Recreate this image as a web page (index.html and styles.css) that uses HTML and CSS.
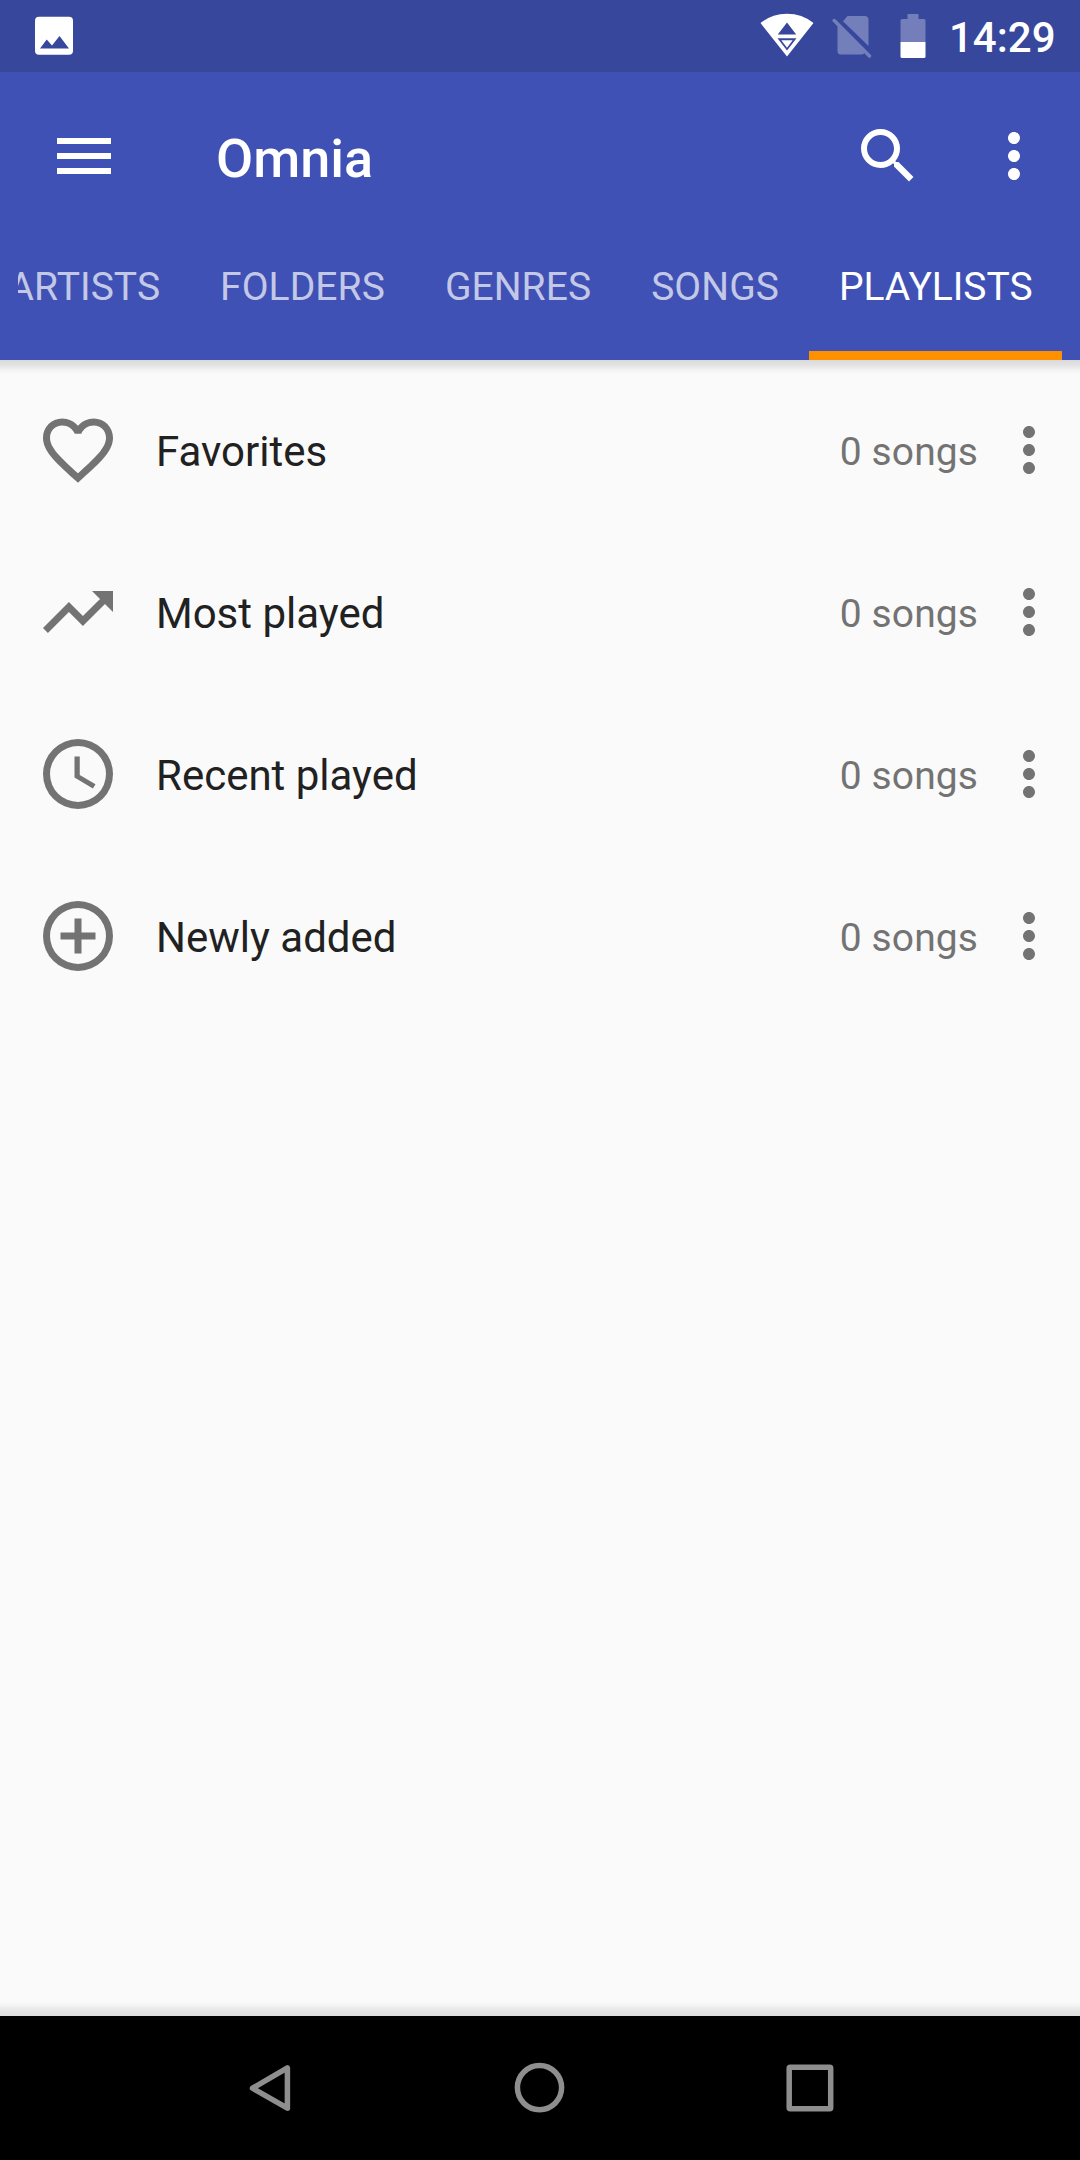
FILE: index.html
```html
<!DOCTYPE html>
<html lang="en">
<head>
<meta charset="utf-8">
<title>Omnia</title>
<link rel="stylesheet" href="styles.css">
</head>
<body>
<svg width="0" height="0" class="defs"><defs>
<symbol id="more" viewBox="0 0 24 24"><path d="M12 8c1.1 0 2-.9 2-2s-.9-2-2-2-2 .9-2 2 .9 2 2 2zm0 2c-1.100 0-2 .9-2 2s.9 2 2 2 2-.9 2-2-.9-2-2-2zm0 6c-1.100 0-2 .9-2 2s.9 2 2 2 2-.9 2-2-.9-2-2-2z"/></symbol>
</defs></svg>
<div class="screen">
  <div class="status">
    <svg class="photo" width="40" height="40" viewBox="0 0 40 40"><path fill-rule="evenodd" d="M5 .7h30a4 4 0 0 1 4 4v30a4 4 0 0 1-4 4H5a4 4 0 0 1-4-4v-30a4 4 0 0 1 4-4zM6 32.500h29L25.500 20 18 29.500 12.700 23.500z"/></svg>
    <svg class="wifi" width="54" height="44" viewBox="0 0 54 44"><path fill-rule="evenodd" d="M.5 10Q12 .8 27 .8T53.500 10L27 43.500zM17.800 21.500h18.400L27 9.500zM17.500 25.200h19L27 37.500z"/><path d="M21.300 27.300h11.400L27 34.800z"/></svg>
    <svg class="sim" width="40" height="44" viewBox="0 0 40 44"><path d="M11 7.300 15.500 2h17a4 4 0 0 1 4 4v26zM5.500 11 33 38.500q-1 2-3.500 2H9a3.500 3.500 0 0 1-3.500-3.500z"/><path class="slash" d="M2.200 6.500 37.500 42"/></svg>
    <svg class="battery" width="26" height="45" viewBox="0 0 26 45"><path opacity=".3" d="M7.500 0h11v5H24q1.500 0 1.500 1.500V28H.5V6.500Q.5 5 2 5h5.500z"/><path d="M.5 28h25v14.500q0 1.500-1.500 1.500H2q-1.500 0-1.500-1.500z"/></svg>
    <span class="clock">14:29</span>
  </div>
  <header class="appbar">
    <div class="toolbar">
      <svg class="icon" viewBox="0 0 24 24"><path d="M3 18h18v-2H3v2zm0-5h18v-2H3v2zm0-7v2h18V6H3z"/></svg>
      <h1 class="title">Omnia</h1>
      <svg class="icon" viewBox="0 0 24 24"><path d="M15.500 14h-.79l-.28-.27A6.471 6.471 0 0 0 16 9.500 6.500 6.500 0 1 0 9.500 16c1.610 0 3.090-.59 4.230-1.570l.27.28v.79l5 4.990L20.490 19l-4.990-5zm-6 0C7.010 14 5 11.990 5 9.500S7.010 5 9.500 5 14 7.010 14 9.500 11.990 14 9.500 14z"/></svg>
      <svg class="icon overflow"><use href="#more"/></svg>
    </div>
    <nav class="tabs">
      <div class="tab">ARTISTS</div>
      <div class="tab">FOLDERS</div>
      <div class="tab">GENRES</div>
      <div class="tab">SONGS</div>
      <div class="tab active">PLAYLISTS</div>
    </nav>
  </header>
  <main class="list">
    <div class="row">
      <svg class="lead" viewBox="0 0 24 24"><path d="M16.500 3c-1.740 0-3.410.81-4.500 2.090C10.910 3.810 9.240 3 7.500 3 4.420 3 2 5.420 2 8.500c0 3.780 3.400 6.860 8.550 11.540L12 21.350l1.450-1.320C18.600 15.360 22 12.280 22 8.500 22 5.420 19.580 3 16.500 3zm-4.400 15.550l-.1.100-.1-.1C7.140 14.240 4 11.390 4 8.500 4 6.500 5.500 5 7.500 5c1.540 0 3.040.99 3.570 2.360h1.870C13.460 5.990 14.960 5 16.500 5c2 0 3.500 1.500 3.500 3.500 0 2.890-3.140 5.740-7.900 10.050z"/></svg>
      <span class="name">Favorites</span><span class="count">0 songs</span>
      <svg class="icon"><use href="#more"/></svg>
    </div>
    <div class="row">
      <svg class="lead" viewBox="0 0 24 24"><path d="M16 6l2.290 2.290-4.880 4.880-4-4L2 16.590 3.410 18l6-6 4 4 6.300-6.290L22 12V6z"/></svg>
      <span class="name">Most played</span><span class="count">0 songs</span>
      <svg class="icon"><use href="#more"/></svg>
    </div>
    <div class="row">
      <svg class="lead" viewBox="0 0 24 24"><path d="M12 2a10 10 0 1 0 0 20 10 10 0 0 0 0-20zm0 18a8 8 0 1 1 0-16 8 8 0 0 1 0 16z"/><path d="M12.500 7H11v6l5.250 3.150.75-1.230-4.500-2.670z"/></svg>
      <span class="name">Recent played</span><span class="count">0 songs</span>
      <svg class="icon"><use href="#more"/></svg>
    </div>
    <div class="row">
      <svg class="lead" viewBox="0 0 24 24"><path d="M12 2a10 10 0 1 0 0 20 10 10 0 0 0 0-20zm0 18a8 8 0 1 1 0-16 8 8 0 0 1 0 16z"/><path d="M13 7h-2v4H7v2h4v4h2v-4h4v-2h-4z"/></svg>
      <span class="name">Newly added</span><span class="count">0 songs</span>
      <svg class="icon"><use href="#more"/></svg>
    </div>
  </main>
  <footer class="navbar">
    <svg viewBox="0 0 60 60"><path d="M12.500 30.200 47.400 9.800v40.400z"/></svg>
    <svg viewBox="0 0 60 60"><circle cx="29.500" cy="29.600" r="22.100"/></svg>
    <svg viewBox="0 0 60 60"><rect x="9.200" y="9.200" width="41.500" height="41.500" rx="1"/></svg>
  </footer>
</div>
</body>
</html>
```
FILE: styles.css
```css
* { box-sizing: border-box; }
body { margin: 0; font-family: Roboto, sans-serif; }
svg { display: block; flex: none; }
.defs { position: absolute; }
.screen { width: 1080px; height: 2160px; display: flex; flex-direction: column; background: #fafafa; overflow: hidden; }
.status { height: 72px; flex: none; display: flex; align-items: flex-start; background: #37479c; color: #fff; fill: #fff; padding: 0 24px 0 34px; }
.photo { margin-top: 16px; }
.wifi { margin: 13px 0 0 auto; }
.sim { margin: 14px 0 0 18px; opacity: .3; }
.slash { stroke: #fff; stroke-width: 3.500px; stroke-linecap: round; }
.battery { margin: 14px 0 0 28px; }
.clock { width: 107px; margin-left: 23px; font-size: 42px; font-weight: 500; line-height: 75px; white-space: nowrap; }
.appbar { height: 288px; flex: none; background: #3f51b5; color: #fff; fill: #fff; }
.toolbar { height: 168px; display: flex; align-items: center; padding: 0 30px 0 48px; }
.icon { width: 72px; height: 72px; }
.title { flex: 1; margin: 0 0 0 96px; font-size: 54px; font-weight: 500; line-height: 64px; padding-top: 5px; }
.overflow { margin-left: 54px; }
.tabs { height: 120px; margin: 0 18px; display: flex; justify-content: flex-end; overflow: hidden; }
.tab { flex: none; padding: 0 30px; font-size: 39px; line-height: 94px; letter-spacing: .06px; color: rgba(255,255,255,.7); }
.active { width: 253px; letter-spacing: -.05px; color: #fff; border-bottom: 9px solid #ff9100; }
.list {
  flex: 1;
  padding-top: 9px;
  background:
    linear-gradient(#dadada, #e2e2e2 35%, #f4f4f4 75%, #fafafa) top / 100% 14px no-repeat,
    linear-gradient(#fafafa, #f4f4f4 25%, #e4e4e4 65%, #dedede) bottom / 100% 14px no-repeat;
}
.row { height: 162px; display: flex; align-items: center; padding: 0 15px 0 36px; fill: #737373; }
.lead { width: 84px; height: 84px; }
.name { flex: 1; margin-left: 36px; font-size: 42px; line-height: 50px; padding-top: 3px; color: #212121; }
.count { margin-right: 15px; font-size: 39px; line-height: 50px; padding-top: 3px; letter-spacing: .1px; color: #737373; }
.navbar { height: 144px; flex: none; background: #000; display: flex; justify-content: center; align-items: center; gap: 210px; }
.navbar svg { width: 60px; height: 60px; fill: none; stroke: #8e8e8e; stroke-width: 5.500px; stroke-linejoin: round; }
```
